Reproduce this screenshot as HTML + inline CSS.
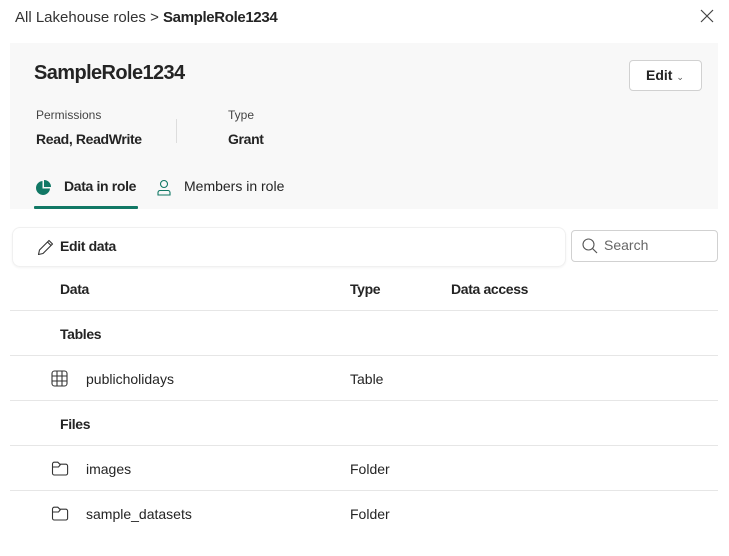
<!DOCTYPE html>
<html><head><style>
*{margin:0;padding:0;box-sizing:border-box}
body{width:729px;height:556px;background:#fff;font-family:"Segoe UI","Liberation Sans",sans-serif;color:#242424;position:relative;overflow:hidden;font-size:14px}
.a{position:absolute;white-space:nowrap}
.b{font-weight:bold;letter-spacing:-0.35px}
.line{position:absolute;left:10px;width:708px;height:1px;background:#e6e6e6}
</style></head><body>
<div class="a" style="left:15px;top:9px;font-size:15px;color:#333">All Lakehouse roles &gt; <span class="b" style="color:#242424">SampleRole1234</span></div>
<svg class="a" style="left:700px;top:9px" width="14" height="14" viewBox="0 0 14 14"><path d="M1 1L13 13M13 1L1 13" stroke="#444" stroke-width="1.2"/></svg>
<div class="a" style="left:10px;top:43px;width:708px;height:166px;background:#f8f8f8"></div>
<div class="a b" style="left:34px;top:62px;font-size:20px;letter-spacing:-0.6px">SampleRole1234</div>
<div class="a" style="left:629px;top:60px;width:73px;height:31px;border:1px solid #d1d1d1;border-radius:4px;background:#fff;font-size:14px;font-weight:bold;padding:6px 0 0 16px">Edit <span style="font-weight:normal;font-size:9px;color:#555">&#8964;</span></div>
<div class="a" style="left:36px;top:108px;font-size:12px;color:#444">Permissions</div>
<div class="a b" style="left:36px;top:131px;font-size:14px">Read, ReadWrite</div>
<div class="a" style="left:176px;top:119px;width:1px;height:24px;background:#ddd"></div>
<div class="a" style="left:228px;top:108px;font-size:12px;color:#444">Type</div>
<div class="a b" style="left:228px;top:131px;font-size:14px">Grant</div>
<svg class="a" style="left:35px;top:179px" width="17" height="17" viewBox="0 0 17 17"><path d="M7.5 2A7 7 0 1 0 15 9.5H7.5Z" fill="#117865"/><path d="M9 1A7 7 0 0 1 16 8H9Z" fill="#117865"/></svg>
<div class="a b" style="left:64px;top:178px;font-size:14px">Data in role</div>
<div class="a" style="left:34px;top:206px;width:104px;height:3px;background:#117865;border-radius:1px"></div>
<svg class="a" style="left:156px;top:179px" width="16" height="17" viewBox="0 0 16 17"><circle cx="8" cy="5" r="3.5" fill="none" stroke="#117865" stroke-width="1.1"/><path d="M2 16v-2.5a2 2 0 0 1 2-2h8a2 2 0 0 1 2 2V16Z" fill="none" stroke="#117865" stroke-width="1.1"/></svg>
<div class="a" style="left:184px;top:178px;font-size:14px">Members in role</div>
<div class="a" style="left:12px;top:227px;width:554px;height:40px;border:1px solid #f0f0f0;border-radius:8px;box-shadow:0 1px 2px rgba(0,0,0,.05)"></div>
<svg class="a" style="left:37px;top:238px" width="18" height="18" viewBox="0 0 18 18"><path d="M12 2.5l3.5 3.5L6 15.5l-4.5 1 1-4.5Z M10.5 4l3.5 3.5" fill="none" stroke="#333" stroke-width="1.1" stroke-linejoin="round"/></svg>
<div class="a b" style="left:60px;top:238px;font-size:14px">Edit data</div>
<div class="a" style="left:571px;top:230px;width:147px;height:32px;border:1px solid #d1d1d1;border-radius:4px"></div>
<svg class="a" style="left:581px;top:237px" width="18" height="18" viewBox="0 0 18 18"><circle cx="7.5" cy="7.5" r="5.5" fill="none" stroke="#555" stroke-width="1.1"/><path d="M11.5 11.5L16 16" stroke="#555" stroke-width="1.2"/></svg>
<div class="a" style="left:604px;top:237px;font-size:14px;color:#666">Search</div>
<div class="a b" style="left:60px;top:281px">Data</div>
<div class="a b" style="left:350px;top:281px">Type</div>
<div class="a b" style="left:451px;top:281px">Data access</div>
<div class="line" style="top:310px"></div>
<div class="a b" style="left:60px;top:326px">Tables</div>
<div class="line" style="top:355px"></div>
<svg class="a" style="left:51px;top:370px" width="17" height="17" viewBox="0 0 17 17"><rect x="1" y="1" width="15" height="15" rx="2.5" fill="none" stroke="#333" stroke-width="1.1"/><path d="M1 6h15M1 11h15M6 1v15M11 1v15" stroke="#333" stroke-width="1.1"/></svg>
<div class="a" style="left:86px;top:371px">publicholidays</div>
<div class="a" style="left:350px;top:371px">Table</div>
<div class="line" style="top:400px"></div>
<div class="a b" style="left:60px;top:416px">Files</div>
<div class="line" style="top:445px"></div>
<svg class="a" style="left:51px;top:461px" width="18" height="15" viewBox="0 0 18 15"><path d="M1.5 3a1.8 1.8 0 0 1 1.8-1.8h3.5l2 2h6a1.8 1.8 0 0 1 1.8 1.8v7.2a1.8 1.8 0 0 1-1.8 1.8H3.3a1.8 1.8 0 0 1-1.8-1.8Z M1.5 6h6l2-2.5" fill="none" stroke="#333" stroke-width="1.1"/></svg>
<div class="a" style="left:86px;top:461px">images</div>
<div class="a" style="left:350px;top:461px">Folder</div>
<div class="line" style="top:490px"></div>
<svg class="a" style="left:51px;top:506px" width="18" height="15" viewBox="0 0 18 15"><path d="M1.5 3a1.8 1.8 0 0 1 1.8-1.8h3.5l2 2h6a1.8 1.8 0 0 1 1.8 1.8v7.2a1.8 1.8 0 0 1-1.8 1.8H3.3a1.8 1.8 0 0 1-1.8-1.8Z M1.5 6h6l2-2.5" fill="none" stroke="#333" stroke-width="1.1"/></svg>
<div class="a" style="left:86px;top:506px">sample_datasets</div>
<div class="a" style="left:350px;top:506px">Folder</div>
</body></html>
